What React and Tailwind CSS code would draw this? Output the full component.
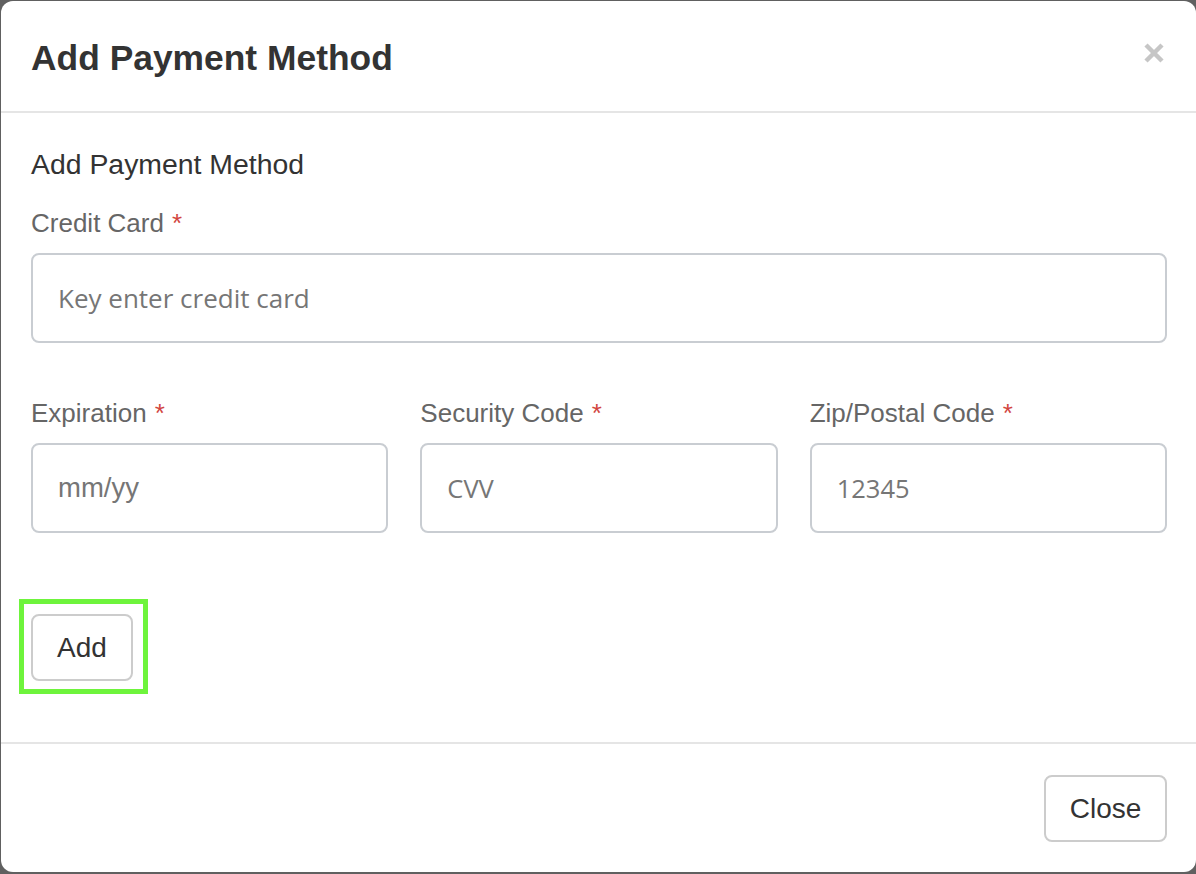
import { useState } from "react";

function Label({ children }) {
  return (
    <div className="text-[26px] leading-[36px] text-[#666666] font-['Liberation_Sans',Arial,sans-serif]">
      {children}
      <span className="ml-[8px] text-[#d2463f]">*</span>
    </div>
  );
}

function Field({ label, placeholder, font, value, onChange }) {
  return (
    <div>
      <Label>{label}</Label>
      <input
        type="text"
        value={value}
        onChange={ev => onChange(ev.target.value)}
        placeholder={placeholder}
        className={
          "mt-[12px] block w-full h-[90px] rounded-[8px] border-2 border-[#c9cdd2] bg-white pl-[25px] text-[#333] outline-none placeholder:text-[#767676] " +
          font
        }
      />
    </div>
  );
}

export default function App() {
  const [card, setCard] = useState("");
  const [exp, setExp] = useState("");
  const [cvv, setCvv] = useState("");
  const [zip, setZip] = useState("");

  return (
    <div className="w-full h-[874px] bg-[#606060] overflow-hidden pl-px pt-px">
      <div className="w-[1195px] h-[871px] bg-white rounded-[12px] flex flex-col font-['Liberation_Sans',Arial,sans-serif] text-[#333333]">
        {/* header */}
        <div className="h-[112px] shrink-0 border-b-2 border-[#e5e5e5] flex items-center justify-between pl-[30px] pr-[31px] pt-[4px]">
          <h4 className="text-[35.4px] leading-[35px] font-bold text-[#333]">Add Payment Method</h4>
          <button className="w-[22px] h-[22px] flex items-center justify-center -mt-[10px]">
            <svg width="20" height="20" viewBox="0 0 20 20">
              <path d="M2 2 L18 18 M18 2 L2 18" stroke="#c6c6c6" strokeWidth="4.5" strokeLinecap="butt" />
            </svg>
          </button>
        </div>

        {/* body */}
        <div className="flex-1 pl-[30px] pr-[29px] pt-[31px]">
          <div className="text-[28.4px] leading-[40px] text-[#333]">Add Payment Method</div>

          <div className="mt-[21px]">
            <Field
              label="Credit Card"
              placeholder="Key enter credit card"
              font="text-[26px] font-['Open_Sans',sans-serif]"
              value={card}
              onChange={setCard}
            />
          </div>

          <div className="mt-[52px] grid grid-cols-3 gap-8">
            <Field
              label="Expiration"
              placeholder="mm/yy"
              font="text-[27.5px] font-['Liberation_Sans',Arial,sans-serif]"
              value={exp}
              onChange={setExp}
            />
            <Field
              label="Security Code"
              placeholder="CVV"
              font="text-[25.5px] font-['Open_Sans',sans-serif]"
              value={cvv}
              onChange={setCvv}
            />
            <Field
              label="Zip/Postal Code"
              placeholder="12345"
              font="text-[25.5px] font-['Open_Sans',sans-serif]"
              value={zip}
              onChange={setZip}
            />
          </div>

          <div className="mt-[66px] -ml-[12px] inline-block border-[5px] border-[#6ef43c] pl-[7px] pr-[10px] pt-[10px] pb-[8px]">
            <button className="block w-[102px] h-[67px] rounded-[8px] border-2 border-[#cccccc] bg-white text-[28px] text-[#333]">
              Add
            </button>
          </div>
        </div>

        {/* footer */}
        <div className="shrink-0 border-t-2 border-[#e5e5e5] flex justify-end pr-[29px] pt-[31px] pb-[30px]">
          <button className="w-[123px] h-[67px] rounded-[8px] border-2 border-[#cccccc] bg-white text-[28px] text-[#333]">
            Close
          </button>
        </div>
      </div>
    </div>
  );
}
